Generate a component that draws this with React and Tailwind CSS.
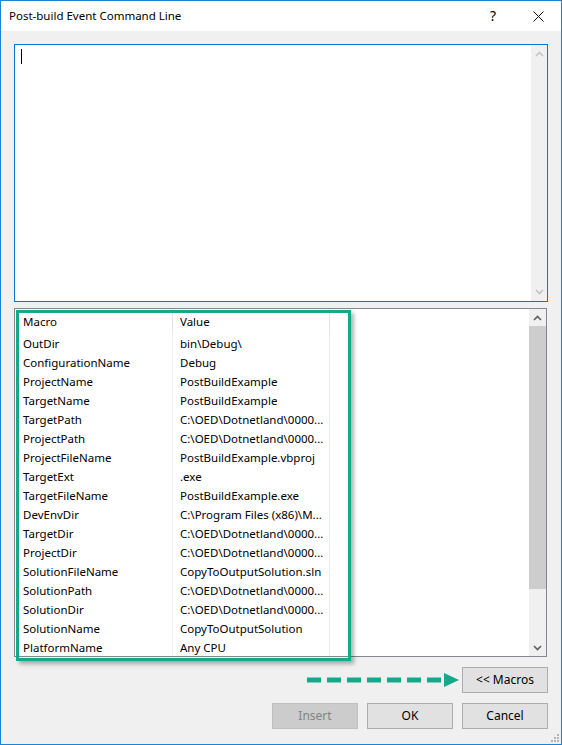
import React from 'react';

const rows = [
  ['OutDir', 'bin\\Debug\\'],
  ['ConfigurationName', 'Debug'],
  ['ProjectName', 'PostBuildExample'],
  ['TargetName', 'PostBuildExample'],
  ['TargetPath', 'C:\\OED\\Dotnetland\\0000...'],
  ['ProjectPath', 'C:\\OED\\Dotnetland\\0000...'],
  ['ProjectFileName', 'PostBuildExample.vbproj'],
  ['TargetExt', '.exe'],
  ['TargetFileName', 'PostBuildExample.exe'],
  ['DevEnvDir', 'C:\\Program Files (x86)\\M...'],
  ['TargetDir', 'C:\\OED\\Dotnetland\\0000...'],
  ['ProjectDir', 'C:\\OED\\Dotnetland\\0000...'],
  ['SolutionFileName', 'CopyToOutputSolution.sln'],
  ['SolutionPath', 'C:\\OED\\Dotnetland\\0000...'],
  ['SolutionDir', 'C:\\OED\\Dotnetland\\0000...'],
  ['SolutionName', 'CopyToOutputSolution'],
  ['PlatformName', 'Any CPU'],
];

const Chevron = ({ up, color }) => (
  <svg width="9" height="6" viewBox="0 0 9 6">
    <path
      d={up ? 'M1 5 L4.5 1.5 L8 5' : 'M1 1 L4.5 4.5 L8 1'}
      fill="none"
      stroke={color}
      strokeWidth="1.6"
    />
  </svg>
);

const Button = ({ children, disabled }) => (
  <button
    className={
      disabled
        ? 'w-[86px] h-[26px] border border-[#bfbfbf] bg-[#cccccc] text-[#838383] text-[12px]'
        : 'w-[86px] h-[26px] border border-[#adadad] bg-[#e1e1e1] text-black text-[12px]'
    }
  >
    {children}
  </button>
);

const App = () => {
  return (
    <div className="w-[562px] h-[745px] border border-[#1883d7] bg-[#f0f0f0] flex flex-col relative font-['Noto_Sans',sans-serif] text-[11.5px] text-black">
      {/* title bar */}
      <div className="h-[30px] bg-white flex items-center pl-[8px] shrink-0">
        <span className="text-[11.5px] leading-none">Post-build Event Command Line</span>
        <span className="ml-auto w-[20px] text-center text-[14px] leading-none mr-[30px]">?</span>
        <svg width="11" height="11" viewBox="0 0 11 11" className="mr-[17px]">
          <path d="M0.5 0.5 L10.5 10.5 M10.5 0.5 L0.5 10.5" stroke="#111" strokeWidth="1" />
        </svg>
      </div>

      <div className="flex flex-col px-[13px] pt-[13px]">
        {/* command text box */}
        <div className="h-[258px] border border-[#0078d7] bg-white flex">
          <div className="flex-1 pl-[6px] pt-[4px]">
            <div className="w-[1px] h-[15px] bg-black" />
          </div>
          <div className="w-[16px] bg-[#f0f0f0] flex flex-col items-center justify-between py-[6px]">
            <Chevron up color="#c4c4c4" />
            <Chevron color="#c4c4c4" />
          </div>
        </div>

        {/* macro list */}
        <div className="relative mt-[6px] mr-[1px] h-[349px] border border-[#828790] bg-white flex">
          <div className="flex-1 flex flex-col">
            <div className="h-[24px] flex items-center shrink-0">
              <div className="w-[158px] pl-[8px] pt-[1px] h-full flex items-center border-r border-[#e5e5e5]">Macro</div>
              <div className="w-[157px] pl-[7px] pt-[1px] h-full flex items-center border-r border-[#e5e5e5]">Value</div>
            </div>
            {rows.map(([name, value]) => (
              <div key={name} className="h-[19px] flex items-center shrink-0">
                <div className="w-[158px] pl-[8px] pt-[2px] h-full flex items-center border-r border-[#f0f0f0] whitespace-nowrap">{name}</div>
                <div className="w-[157px] pl-[7px] pt-[2px] h-full flex items-center border-r border-[#e8edf5] whitespace-nowrap">{value}</div>
              </div>
            ))}
          </div>
          <div className="w-[17px] bg-[#f0f0f0] flex flex-col items-center">
            <div className="h-[17px] flex items-center justify-center">
              <Chevron up color="#606060" />
            </div>
            <div className="w-full h-[263px] bg-[#cdcdcd]" />
            <div className="flex-1" />
            <div className="h-[17px] flex items-center justify-center">
              <Chevron color="#606060" />
            </div>
          </div>

          {/* highlight */}
          <div className="absolute left-[1px] top-[1px] w-[335px] h-[351px] border-[3px] border-[#14a98b] shadow-[3px_3px_4px_rgba(0,0,0,0.3)]" />
        </div>

        {/* macros button row */}
        <div className="mt-[10px] flex items-center justify-end">
          <svg width="156" height="16" viewBox="0 0 156 16" className="mr-[2px]">
            <line x1="3" y1="8" x2="142" y2="8" stroke="#14a98b" strokeWidth="5" strokeDasharray="14 6" />
            <polygon points="140,1 155,8 140,15" fill="#14a98b" />
          </svg>
          <Button>&lt;&lt; Macros</Button>
        </div>

        {/* bottom buttons */}
        <div className="mt-[10px] flex items-center justify-end gap-[9px]">
          <Button disabled>Insert</Button>
          <Button>OK</Button>
          <Button>Cancel</Button>
        </div>
      </div>

      {/* resize grip */}
      <div className="absolute right-[2px] bottom-[2px] grid grid-cols-3 gap-[1px]">
        <span className="w-[2px] h-[2px]" />
        <span className="w-[2px] h-[2px]" />
        <span className="w-[2px] h-[2px] bg-[#b5b5b5]" />
        <span className="w-[2px] h-[2px]" />
        <span className="w-[2px] h-[2px] bg-[#b5b5b5]" />
        <span className="w-[2px] h-[2px] bg-[#b5b5b5]" />
        <span className="w-[2px] h-[2px] bg-[#b5b5b5]" />
        <span className="w-[2px] h-[2px] bg-[#b5b5b5]" />
        <span className="w-[2px] h-[2px] bg-[#b5b5b5]" />
      </div>
    </div>
  );
};

export default App;
